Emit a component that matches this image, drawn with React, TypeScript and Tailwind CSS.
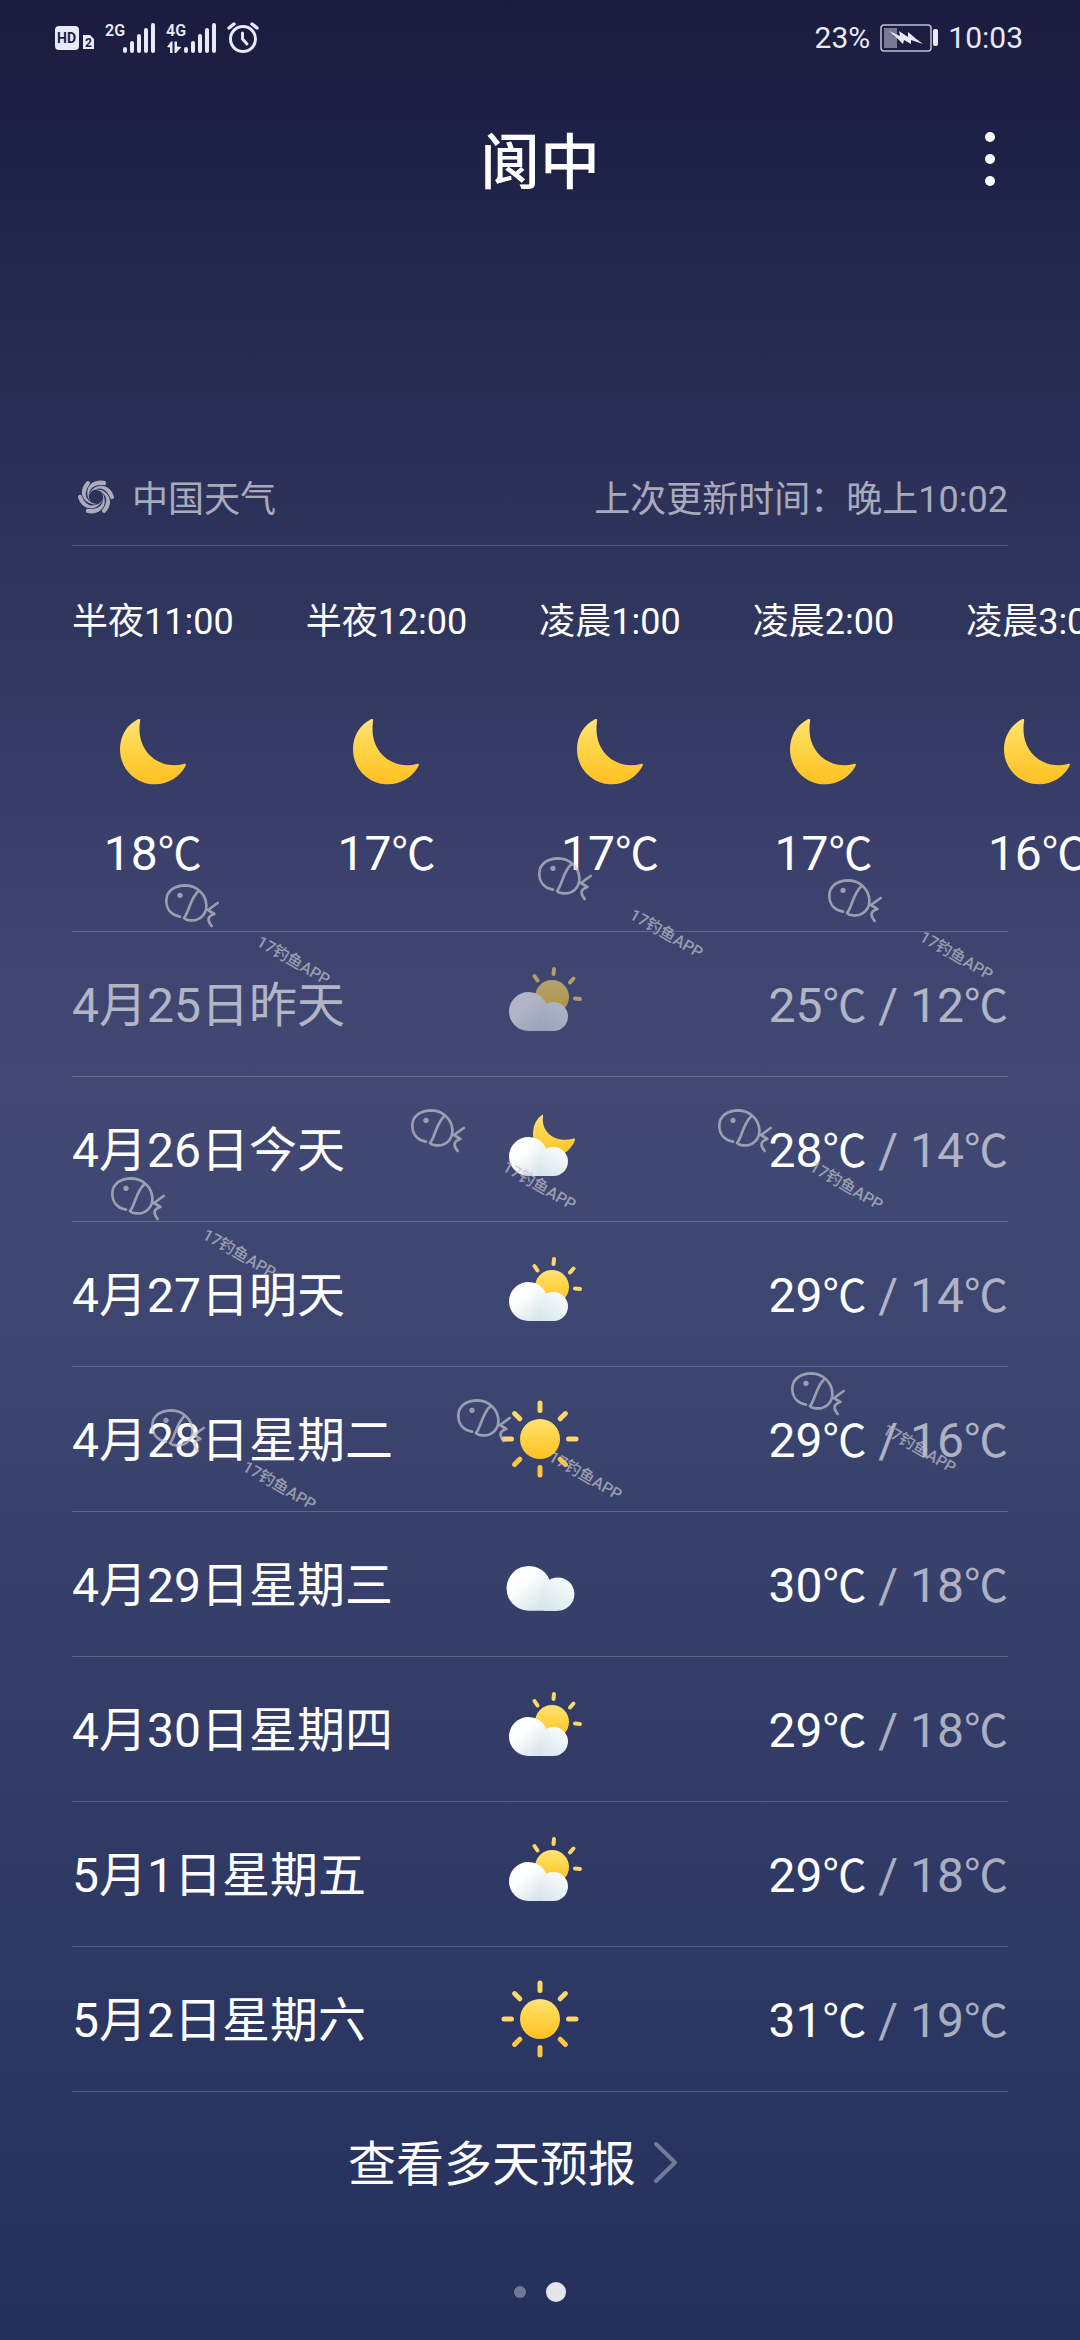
type Sky = "sunny" | "cloudy" | "partlyDay" | "partlyNight";

const hours = [
  { time: "半夜11:00", temp: 18 },
  { time: "半夜12:00", temp: 17 },
  { time: "凌晨1:00", temp: 17 },
  { time: "凌晨2:00", temp: 17 },
  { time: "凌晨3:00", temp: 16 },
];

const days: {
  date: string;
  sky: Sky;
  high: number;
  low: number;
  past?: boolean;
}[] = [
  { date: "4月25日昨天", sky: "partlyDay", high: 25, low: 12, past: true },
  { date: "4月26日今天", sky: "partlyNight", high: 28, low: 14 },
  { date: "4月27日明天", sky: "partlyDay", high: 29, low: 14 },
  { date: "4月28日星期二", sky: "sunny", high: 29, low: 16 },
  { date: "4月29日星期三", sky: "cloudy", high: 30, low: 18 },
  { date: "4月30日星期四", sky: "partlyDay", high: 29, low: 18 },
  { date: "5月1日星期五", sky: "partlyDay", high: 29, low: 18 },
  { date: "5月2日星期六", sky: "sunny", high: 31, low: 19 },
];

// free positions of the fish stamps over the page
const stamps = [
  { x: 165, y: 884 },
  { x: 538, y: 857 },
  { x: 828, y: 879 },
  { x: 411, y: 1109 },
  { x: 718, y: 1109 },
  { x: 111, y: 1177 },
  { x: 151, y: 1409 },
  { x: 457, y: 1399 },
  { x: 791, y: 1372 },
];

function Gradients() {
  return (
    <svg className="absolute size-0" aria-hidden="true">
      <defs>
        <linearGradient id="gold" x1="0" y1="0" x2="0" y2="1">
          <stop offset="0" stopColor="#ffe27a" />
          <stop offset="0.35" stopColor="#ffd84f" />
          <stop offset="1" stopColor="#ffc022" />
        </linearGradient>
        <linearGradient id="puff" x1="0" y1="0" x2="1" y2="1">
          <stop offset="0.35" stopColor="#ffffff" />
          <stop offset="0.85" stopColor="#d3e2ea" />
        </linearGradient>
        <linearGradient id="puffSmall" x1="1" y1="0" x2="0.3" y2="1">
          <stop offset="0" stopColor="#ffffff" />
          <stop offset="1" stopColor="#d9e7ee" />
        </linearGradient>
      </defs>
    </svg>
  );
}

function Cloud() {
  return (
    <>
      <path
        d="M36.500 36a19.500 19.500 0 0 0 0 39H61.500V56H56A19.500 19.500 0 0 0 36.500 36Z"
        fill="url(#puff)"
      />
      <path
        d="M61.500 46a14.500 14.500 0 0 1 0 29H50a14.500 14.500 0 0 1 -3 -14.500A14.500 14.500 0 0 1 61.500 46Z"
        fill="url(#puffSmall)"
      />
    </>
  );
}

function SkyIcon({ sky }: { sky: Sky }) {
  return (
    <svg viewBox="0 0 96 96" className="size-24">
      {sky === "sunny" && (
        <>
          <circle cx="48" cy="48" r="20" fill="url(#gold)" />
          {[0, 45, 90, 135, 180, 225, 270, 315].map((angle) => (
            <path
              key={angle}
              d="M48 12V19.500"
              transform={`rotate(${angle} 48 48)`}
              stroke={angle > 90 && angle < 270 ? "#fdc544" : "#fbd768"}
              strokeWidth="5"
              strokeLinecap="round"
            />
          ))}
        </>
      )}

      {sky === "cloudy" && (
        <g transform="translate(-5 -11.500) scale(1.150)">
          <Cloud />
        </g>
      )}

      {sky === "partlyDay" && (
        <>
          <circle cx="60" cy="41" r="17" fill="url(#gold)" />
          <path
            d="M62 13L61.500 18M42.500 20L45.500 24.500M81.500 22.500L78 26.500M83 42.500L88 43"
            stroke="#fbd768"
            strokeWidth="4"
            strokeLinecap="round"
          />
          <Cloud />
        </>
      )}

      {sky === "partlyNight" && (
        <>
          <path
            d="M50 14C44 18 41 25 41 33C41 48 52 58 64 56C73 54 80 47 83 39C83 37 82 37 80 38C62 42 49 30 51 16C51 14 51 13 50 14Z"
            fill="url(#gold)"
          />
          <Cloud />
        </>
      )}
    </svg>
  );
}

function Moon() {
  return (
    <svg viewBox="0 0 196 196" className="size-[66px]">
      <path
        d="M60 4C60 -1 57 -1 53 1C20 18 0 52 0 90C0 148 46 194 104 194C143 194 178 172 195 139C197 134 194 132 189 134C120 152 44 100 60 4Z"
        fill="url(#gold)"
      />
    </svg>
  );
}

function Temp({ value }: { value: number }) {
  return (
    <>
      {value}
      <span className="text-[44px] leading-none">℃</span>
    </>
  );
}

function Signal({ label, arrows }: { label: string; arrows?: boolean }) {
  return (
    <svg viewBox="0 0 50 32" className="h-8 w-[50px]" fill="currentColor">
      <text x="0" y="14" fontSize="16" fontWeight="600">
        {label}
      </text>
      {[25, 19, 12, 6, 1].map((top, i) => (
        <rect key={top} x={18 + 7 * i} y={top} width="4" height={31 - top} rx="2" />
      ))}
      {arrows && (
        <path d="M1 25L5 19.500H6.500V31H4V25.500ZM8.500 19.500H11V24.500L15.500 25L10 31H8.500Z" />
      )}
    </svg>
  );
}

function StatusBar() {
  return (
    <div className="flex h-[75px] items-center justify-between pr-[57px] pl-[55px] text-[30px] text-[#e9e9f8]">
      <div className="flex items-center gap-[11px]">
        <svg viewBox="0 0 39 26" className="h-[26px] w-[39px]" fill="currentColor">
          <rect x="0" y="1" width="24" height="24" rx="4" />
          <text x="2" y="18" fontSize="14" fontWeight="700" fill="#1b1d40">
            HD
          </text>
          <path d="M28 10H35L39 14V24H28Z" />
          <text x="30" y="22" fontSize="12" fontWeight="700" fill="#1b1d40">
            2
          </text>
        </svg>
        <Signal label="2G" />
        <Signal label="4G" arrows />
        <svg
          viewBox="0 0 32 32"
          className="size-8"
          fill="none"
          stroke="currentColor"
          strokeWidth="3"
          strokeLinecap="round"
        >
          <circle cx="16" cy="17" r="12.500" />
          <path d="M15.500 11V17L20 22" />
          <path d="M2 6L7 2M25 2L30 6" strokeWidth="3.500" />
        </svg>
      </div>

      <div className="flex items-center gap-[10px]">
        <span>23%</span>
        <svg viewBox="0 0 58 28" className="h-7 w-[58px]" fill="currentColor">
          <rect
            x="1"
            y="1"
            width="50"
            height="26"
            rx="3"
            fill="none"
            stroke="currentColor"
            strokeWidth="1.500"
            opacity="0.800"
          />
          <rect x="4" y="4" width="13" height="20" opacity="0.450" />
          <path d="M9 7L20 12L19 7L28 13L28 8L34 13L35 14L43 20L31 16L31 20L24 16L23 20L18 15Z" />
          <rect x="53" y="5" width="5" height="17" rx="2" />
        </svg>
        <span>10:03</span>
      </div>
    </div>
  );
}

function Stamp({ x, y }: { x: number; y: number }) {
  return (
    <div
      className="pointer-events-none absolute h-[100px] w-[170px] text-[#c5c4cc]/70"
      style={{ left: x, top: y }}
    >
      <svg
        viewBox="0 0 162 132"
        className="h-11 w-[54px]"
        fill="none"
        stroke="currentColor"
        strokeWidth="8"
        strokeLinecap="round"
        strokeLinejoin="round"
      >
        <path d="M45 98C16 92 3 72 4 48C5 20 30 4 62 4C97 5 122 32 124 62C126 90 105 112 75 109C65 108 60 106 57 102C72 85 75 44 100 22" />
        <path d="M158 57L129 78L148 90C130 96 124 106 140 126" />
        <circle cx="45" cy="34" r="4" />
      </svg>
      <span className="absolute top-12 left-[98px] origin-top-left rotate-30 text-[16px] leading-5 font-medium whitespace-nowrap">
        17钓鱼APP
      </span>
    </div>
  );
}

export default function App() {
  return (
    <div
      lang="zh-CN"
      className="relative flex min-h-screen flex-col overflow-hidden bg-[linear-gradient(to_bottom,#1a1c3f_0%,#1f2247_7%,#2c3058_20%,#30375f_28%,#3a406b_36%,#414973_46%,#3c4570_59%,#38416b_65%,#2a3561_89%,#25305c_100%)] font-[Roboto,'Noto_Sans_CJK_SC',sans-serif] text-white"
    >
      <Gradients />
      <StatusBar />

      <header className="grid h-[174px] grid-cols-[1fr_auto_1fr] items-center">
        <h1 className="col-start-2 pt-1 text-[60px] leading-[90px] font-medium">
          阆中
        </h1>
        <div className="flex justify-end pr-[84px]">
          <button type="button" aria-label="更多">
            <svg viewBox="0 0 12 60" className="h-[60px] w-3" fill="currentColor">
              <circle cx="6" cy="5" r="5" />
              <circle cx="6" cy="27" r="5" />
              <circle cx="6" cy="49" r="5" />
            </svg>
          </button>
        </div>
      </header>

      <section className="mx-[72px] mt-[203px] flex h-[94px] items-center justify-between border-b border-white/20 text-[36px] text-white/60">
        <div className="flex items-center gap-[18px] pl-[6px]">
          <svg
            viewBox="-19 -19 38 38"
            className="mb-1 size-9"
            fill="currentColor"
          >
            {[0, 60, 120, 180, 240, 300].map((angle) => (
              <path
                key={angle}
                d="M10 -16.500C1 -19 -7 -15.500 -9 -7C-10 -2 -8 3 -5 6C-8 2 -8.500 -3 -6 -7.500C-3.500 -12 2 -13.500 9.500 -12.500Q11.500 -14 10 -16.500Z"
                transform={`rotate(${angle})`}
              />
            ))}
          </svg>
          <span className="pt-0.5">中国天气</span>
        </div>
        <span className="pt-0.5">上次更新时间：晚上10:02</span>
      </section>

      <section>
        <ul className="flex gap-[72px] overflow-x-auto px-[72px] pt-[49px] pb-[41px] [scrollbar-width:none]">
          {hours.map((hour) => (
            <li key={hour.time} className="flex shrink-0 flex-col items-center">
              <span className="text-[36px] leading-[54px]">{hour.time}</span>
              <div className="mt-[70px] mb-[33px]">
                <Moon />
              </div>
              <span className="text-[48px] leading-[72px]">
                <Temp value={hour.temp} />
              </span>
            </li>
          ))}
        </ul>
        <div className="mx-[72px] h-px bg-white/20" />
      </section>

      <ul className="mx-[72px] text-[48px] leading-[72px]">
        {days.map((day) => (
          <li key={day.date} className="h-[145px] border-b border-white/20">
            <div
              className={
                day.past
                  ? "grid h-full grid-cols-[1fr_96px_1fr] items-center opacity-60"
                  : "grid h-full grid-cols-[1fr_96px_1fr] items-center"
              }
            >
              <span className="pt-1">{day.date}</span>
              <SkyIcon sky={day.sky} />
              <span className="pt-1 text-right">
                <Temp value={day.high} />
                <span className={day.past ? "" : "text-white/60"}>
                  {" / "}
                  <Temp value={day.low} />
                </span>
              </span>
            </div>
          </li>
        ))}
      </ul>

      <a
        href="#forecast"
        className="flex h-[142px] items-center justify-center pr-9 text-[48px] leading-[72px]"
      >
        <span className="pt-1">查看多天预报</span>
        <svg
          viewBox="0 0 60 60"
          className="size-[60px]"
          fill="none"
          stroke="currentColor"
          strokeWidth="4"
          strokeLinecap="round"
          strokeLinejoin="round"
          opacity="0.350"
        >
          <path d="M20 11L39 29.500L20 48" />
        </svg>
      </a>

      <div className="flex items-center justify-center gap-5 pt-12">
        <span className="size-3 rounded-full bg-white/35" />
        <span className="size-5 rounded-full bg-[#e6e5ea]" />
      </div>

      {stamps.map((stamp) => (
        <Stamp key={`${stamp.x}-${stamp.y}`} x={stamp.x} y={stamp.y} />
      ))}
    </div>
  );
}
